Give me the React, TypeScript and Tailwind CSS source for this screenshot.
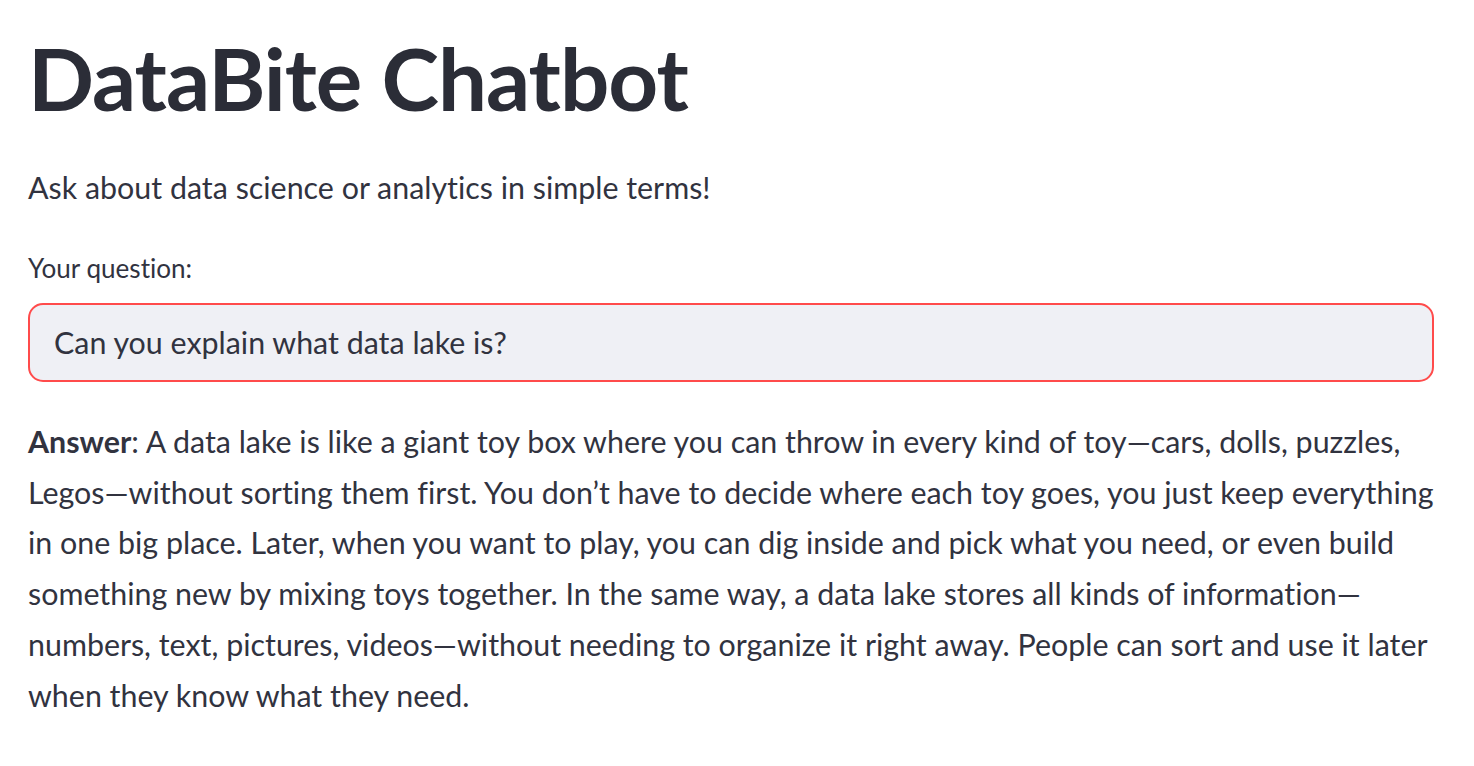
import React from "react";

export default function App() {
  return (
    <div className="min-h-screen bg-white text-[#31333F] [font-variant-ligatures:none]" style={{ fontFamily: "Lato, 'Noto Sans', sans-serif" }}>
      <div className="pl-[28px] pr-[40px] pt-[20px]">
        <h1 className="text-[87px] font-bold leading-[116px] tracking-[-1px] text-[#2b2d37]">DataBite Chatbot</h1>
        <p className="mt-[26px] text-[30.4px] leading-[50px]">Ask about data science or analytics in simple terms!</p>
        <div className="mt-[36px] text-[26.1px] leading-[40px]">Your question:</div>
        <div className="mt-[15px] flex h-[79px] items-center rounded-[15px] border-2 border-[#ff4b4b] bg-[#eff0f5] pl-[24px] text-[30.4px]">
          Can you explain what data lake is?
        </div>
        <p className="mt-[34px] text-[30.4px] leading-[50.7px]">
          <strong className="font-bold">Answer</strong>: A data lake is like a giant toy box where you can throw in every kind of toy—cars, dolls, puzzles,
          <br />
          Legos—without sorting them first. You don’t have to decide where each toy goes, you just keep everything
          <br />
          in one big place. Later, when you want to play, you can dig inside and pick what you need, or even build
          <br />
          something new by mixing toys together. In the same way, a data lake stores all kinds of information—
          <br />
          numbers, text, pictures, videos—without needing to organize it right away. People can sort and use it later
          <br />
          when they know what they need.
        </p>
      </div>
    </div>
  );
}
